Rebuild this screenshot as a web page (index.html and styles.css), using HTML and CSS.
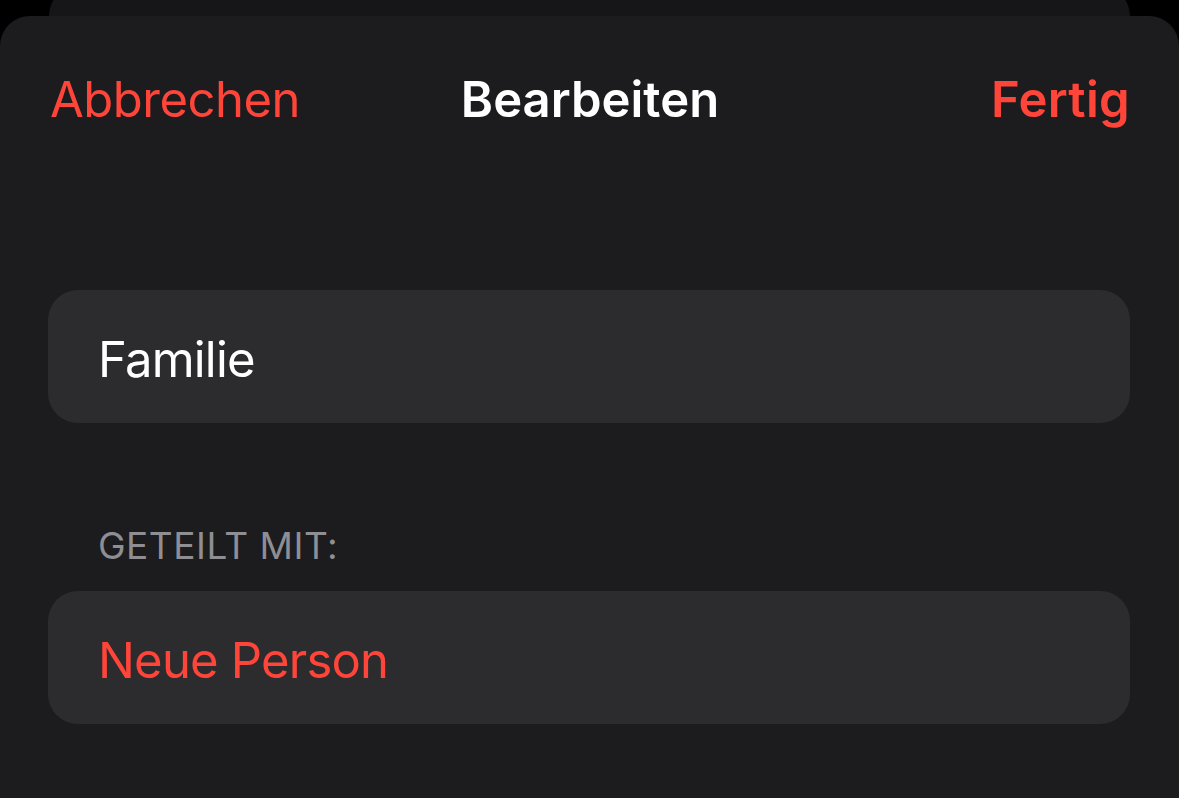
FILE: index.html
```html
<!DOCTYPE html>
<html lang="de">
<head>
<meta charset="utf-8">
<title>Bearbeiten</title>
<link rel="stylesheet" href="styles.css">
</head>
<body>
<div class="back-card"></div>
<div class="sheet">
  <header class="nav">
    <span class="nav-btn nav-left">Abbrechen</span>
    <span class="nav-title">Bearbeiten</span>
    <span class="nav-btn nav-right">Fertig</span>
  </header>
  <div class="content">
    <div class="field field-name">Familie</div>
    <div class="section-label">GETEILT MIT:</div>
    <div class="field field-add">Neue Person</div>
  </div>
</div>
</body>
</html>
```
FILE: styles.css
```css
html, body {
  margin: 0;
  padding: 0;
  background: #000;
  height: 100%;
  overflow: hidden;
}
body {
  font-family: Inter, "Liberation Sans", sans-serif;
  -webkit-font-smoothing: antialiased;
}
.back-card {
  height: 30px;
  margin: -14px 49px 0 49px;
  background: #161618;
  border-radius: 30px 30px 0 0;
}
.sheet {
  background: #1c1c1e;
  border-radius: 30px 30px 0 0;
  height: calc(100% - 16px);
}
.nav {
  display: grid;
  grid-template-columns: 1fr auto 1fr;
  align-items: center;
  padding: 53px 49px 0 50px;
  height: 62px;
  line-height: 62px;
  font-size: 49px;
}
.nav-btn {
  color: #ff453a;
}
.nav-left {
  justify-self: start;
  letter-spacing: -0.5px;
}
.nav-right {
  justify-self: end;
  font-weight: 600;
  letter-spacing: 0.3px;
}
.nav-title {
  color: #fff;
  font-weight: 600;
}
.content {
  padding: 0 49px 0 48px;
}
.field {
  box-sizing: border-box;
  background: #2c2c2e;
  border-radius: 30px;
  height: 133px;
  display: flex;
  align-items: center;
  padding: 5px 0 0 50px;
  font-size: 49px;
  letter-spacing: -0.8px;
}
.field-name {
  margin-top: 159px;
  color: #fff;
}
.field-add {
  margin-top: 23px;
  color: #ff453a;
}
.section-label {
  margin-top: 101px;
  padding-left: 50px;
  height: 44px;
  line-height: 44px;
  font-size: 37px;
  letter-spacing: 0.5px;
  color: #8e8e93;
}
```
